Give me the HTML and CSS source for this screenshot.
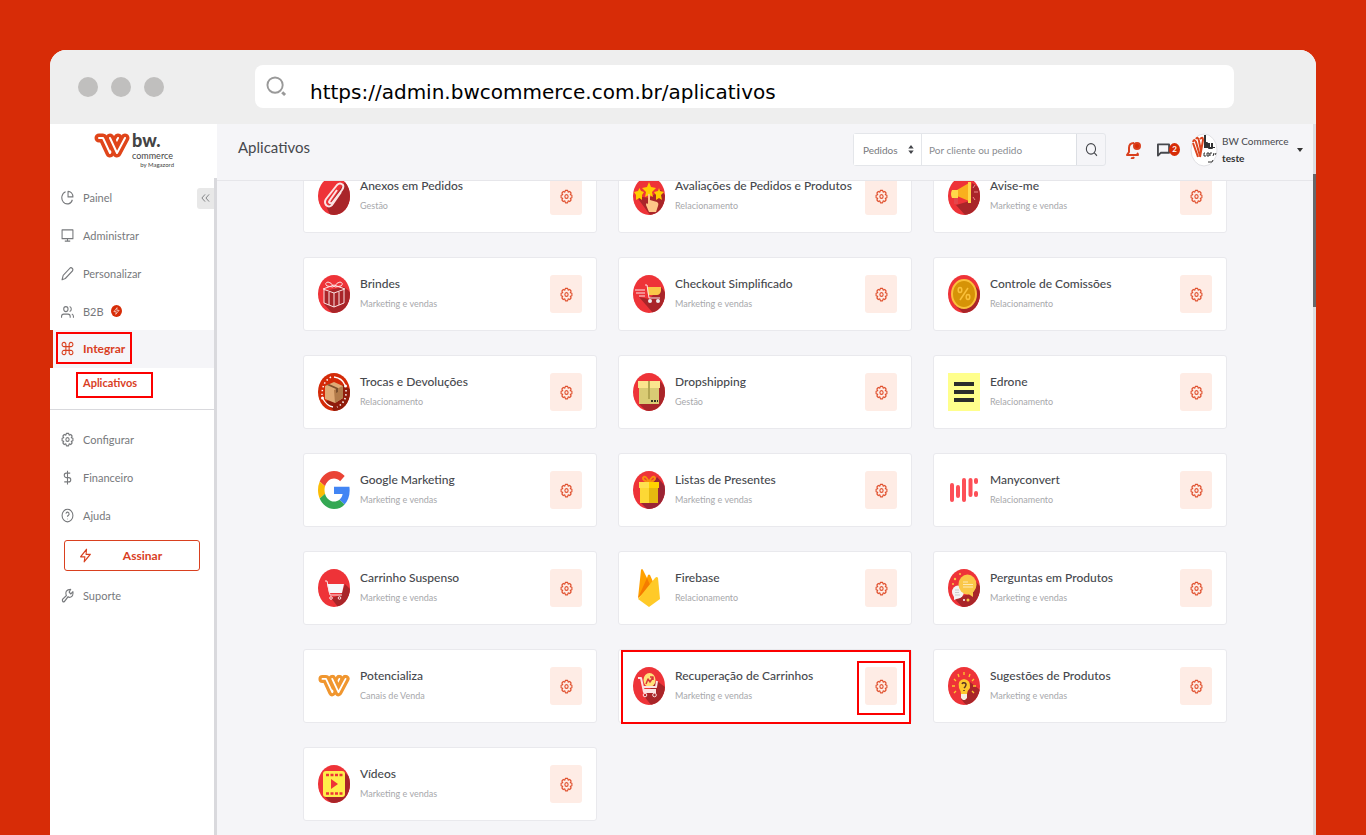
FILE: index.html
```
<!DOCTYPE html>
<html lang="pt-BR">
<head>
    <meta charset="UTF-8">
    <meta name="viewport" content="width=device-width, initial-scale=1.0">
    <title>Aplicativos - BW Commerce</title>
    <link rel="stylesheet" href="styles.css">
</head>
<body>
    <svg class="sprite" aria-hidden="true">
        <defs>
            <clipPath id="oval"><ellipse cx="16" cy="19" rx="16" ry="19"/></clipPath>
        </defs>
        <symbol id="gear" viewBox="0 0 24 24" preserveAspectRatio="none">
            <path d="M10 2h4l1 3 3-1 2.500 2.500L19 9l3 1v4l-3 1 1.500 2.500L18 20l-3-1-1 3h-4l-1-3-3 1-2.500-2.500L5 15l-3-1v-4l3-1-1.500-2.500L6 4l3 1z"/>
            <circle cx="12" cy="12" r="3"/>
        </symbol>
        <symbol id="bolt" viewBox="0 0 24 24" preserveAspectRatio="none"><path d="M14 2L3 14h8l-1.500 8L21 10h-8z"/></symbol>
        <symbol id="w-mark" viewBox="0 0 36 26">
            <path class="tube" d="M5 5h4l7 15 8-15"/>
            <path class="hollow" d="M5 5h4l7 15 8-15"/>
            <path class="tube" d="M16 5l7 15 8-15"/>
            <path class="hollow" d="M16 5l7 15 8-15"/>
        </symbol>
    </svg>

    <div class="window">
        <div class="browser-bar">
            <div class="dots"><span></span><span></span><span></span></div>
            <label class="address">
                <svg viewBox="0 0 22 22"><circle cx="9.500" cy="9.500" r="8"/><path d="M17 17l3 3" class="handle"/></svg>
                <input type="text" value="https://admin.bwcommerce.com.br/aplicativos" aria-label="Endereço">
            </label>
        </div>

        <div class="app">
            <aside class="sidebar">
                <a class="logo" href="#" aria-label="bw. commerce">
                    <svg class="logo-mark" viewBox="0 0 36 26"><use href="#w-mark"/></svg>
                    <span class="logo-text">
                        <b>bw.</b>
                        <span>commerce</span>
                        <small>by Magazord</small>
                    </span>
                </a>
                <nav class="menu">
                    <div class="menu-top">
                        <a class="item" href="#"><svg viewBox="0 0 24 24" preserveAspectRatio="none"><path d="M21 15.500A10 10 0 1 1 8.500 2.800M13 2v9h9a9 9 0 0 0-9-9z"/></svg>Painel</a>
                        <button class="collapse" aria-label="Recolher menu"><svg viewBox="0 0 10 10"><path d="M4.500 1L1 5l3.500 4M9 1L5.500 5 9 9"/></svg></button>
                    </div>
                    <a class="item" href="#"><svg viewBox="0 0 24 24" preserveAspectRatio="none"><path d="M2 3h20v14H2zM12 17v4M7 21h10"/></svg>Administrar</a>
                    <a class="item" href="#"><svg viewBox="0 0 24 24" preserveAspectRatio="none"><path d="M17 3q2-1 4 1t0 4L8 20l-6 2 2-7z"/></svg>Personalizar</a>
                    <a class="item" href="#"><svg viewBox="0 0 24 24" preserveAspectRatio="none"><circle cx="9" cy="8" r="4"/><path d="M1 22v-2q0-4 4-4h8q4 0 4 4v2M16 4q3 1 3 4t-3 4M20 16q3 1 3 4v2"/></svg>B2B<span class="b2b-badge"><svg><use href="#bolt"/></svg></span></a>
                    <a class="item active" href="#"><svg viewBox="0 0 24 24" preserveAspectRatio="none"><path d="M9 9h6v6H9zM9 9H6a3.500 3.500 0 1 1 3-3zM15 9V6a3.500 3.500 0 1 1 3 3zM15 15h3a3.500 3.500 0 1 1-3 3zM9 15v3a3.500 3.500 0 1 1-3-3z"/></svg>Integrar</a>
                    <a class="subitem" href="#">Aplicativos</a>
                    <hr>
                    <a class="item" href="#"><svg><use href="#gear"/></svg>Configurar</a>
                    <a class="item" href="#"><svg viewBox="0 0 24 24" preserveAspectRatio="none"><path d="M12 1v22M17 5H9.500a3.500 3.500 0 0 0 0 7h5a3.500 3.500 0 0 1 0 7H6"/></svg>Financeiro</a>
                    <a class="item" href="#"><svg viewBox="0 0 24 24" preserveAspectRatio="none"><circle cx="12" cy="12" r="10"/><path d="M9 9q1-3 3.500-2.500T15 10q-1 2-3 3v1M12 17v1"/></svg>Ajuda</a>
                    <button class="subscribe"><svg><use href="#bolt"/></svg><span>Assinar</span></button>
                    <a class="item" href="#"><svg viewBox="0 0 24 24" preserveAspectRatio="none"><path d="M15 6.500l3 3 4-3.500q1 6-3 8t-6 0l-7 8q-2 1-3-1t0-3l7-6q-2-4 0-7t8-3z"/></svg>Suporte</a>
                </nav>
            </aside>

            <main class="main">
                <header class="topbar">
                    <h1>Aplicativos</h1>
                    <form class="search">
                        <span class="select-wrap">
                            <select aria-label="Buscar em"><option>Pedidos</option><option>Clientes</option></select>
                            <svg viewBox="0 0 6 10"><path d="M0 4l3-4 3 4zM0 6l3 4 3-4z"/></svg>
                        </span>
                        <input type="text" placeholder="Por cliente ou pedido" aria-label="Por cliente ou pedido">
                        <button type="button" aria-label="Buscar"><svg viewBox="0 0 24 24" preserveAspectRatio="none"><circle cx="11" cy="11" r="8.500"/><path d="M17 17l5 5"/></svg></button>
                    </form>
                    <button class="bell" aria-label="Notificações"><svg viewBox="0 0 16 18"><path d="M8 2Q3 2 3 7v4l-2 3h11q0-1-1-2M5 17q2 1 3-1"/><circle cx="11" cy="5" r="3"/></svg></button>
                    <button class="chat" aria-label="Mensagens"><svg viewBox="0 0 14 14"><path d="M1 13V1h12v9H4z"/></svg><span>2</span></button>
                    <button class="user">
                        <svg class="avatar" viewBox="0 0 28 34">
                            <ellipse cx="14" cy="17" rx="13" ry="16"/>
                            <path class="red" d="M3 9q1-4 3 0l4 14M6 6q2-3 3 2l2 10M10 6q3-3 3 1l-3 17M3 10l5 14"/>
                            <path class="dark" d="M15 2v13M15 10h2v5M19 10v5h3v-5M22 10v5M24 14v1"/>
                            <path class="dark-thin" d="M15 20h-1v3h2M17 20h2v3h-2zM20 23v-3h2M23 23l1-3M25 22l1-2M18 29h4l1-2"/>
                        </svg>
                        <span class="user-name">BW Commerce<b>teste</b></span>
                        <span class="caret"></span>
                    </button>
                </header>

                <div class="content">
                    <div class="apps">
                        <article class="card">
                            <svg class="icon" viewBox="0 0 32 38"><g clip-path="url(#oval)"><path fill="#ee3338" d="M0 0h32v38H0z"/><path fill="#a92529" d="M27 5l5 6v27H12L9 31z"/></g><path class="line" d="M23 15l-9 13q-3 3-6 0-2-3 0-6L19 8q3-3 6 0 1 2-1 5L14 26q-2 1-3-1l1-2 7-10"/></svg>
                            <div class="info"><h2>Anexos em Pedidos</h2><p>Gestão</p></div>
                            <button class="config" aria-label="Configurar"><svg><use href="#gear"/></svg></button>
                        </article>
                        <article class="card">
                            <svg class="icon" viewBox="0 0 32 38"><g clip-path="url(#oval)"><path fill="#ee3338" d="M0 0h32v38H0z"/><path fill="#a92529" d="M3 19l14 19h15V18l-4-5-12 8z"/></g><path fill="#fc0" d="M16 5l2 5 5 1-4 4 1 5-4-2-4 2 1-5-4-4 5-1zM6.500 11l1.500 3 3 1-2 3v5l-2.500-2L3 23v-5l-2-3 4-1zM26 11l1 3 4 1-3 3 1 5-3-2-3 2v-5l-2-3 4-1z"/><path fill="#fdc689" d="M15 17q2-1 2 1v5l7 2q2 1 1 4l-2 6h-7l-3-7q0-3 2-1z"/></svg>
                            <div class="info"><h2>Avaliações de Pedidos e Produtos</h2><p>Relacionamento</p></div>
                            <button class="config" aria-label="Configurar"><svg><use href="#gear"/></svg></button>
                        </article>
                        <article class="card">
                            <svg class="icon" viewBox="0 0 32 38"><g clip-path="url(#oval)"><path fill="#ee3338" d="M0 0h32v38H0z"/><path fill="#a92529" d="M8 28l9 10h15V11l-8-5-2 18z"/></g><path fill="#f9b01e" d="M9 13l12-7v18L9 19z"/><path fill="#ffd94a" d="M4 13h6v8H4q-2-4 0-8zM20 5h3v21h-3z"/><path fill="#e4464b" d="M6 21h4v6H6z"/><path stroke="#e88" fill="none" stroke-width="1" d="M25 11l2-3M26 15h4M25 20l2 3"/></svg>
                            <div class="info"><h2>Avise-me</h2><p>Marketing e vendas</p></div>
                            <button class="config" aria-label="Configurar"><svg><use href="#gear"/></svg></button>
                        </article>

                        <article class="card">
                            <svg class="icon" viewBox="0 0 32 38"><g clip-path="url(#oval)"><path fill="#ee3338" d="M0 0h32v38H0z"/><path fill="#a92529" d="M6 29l8 9h18V17l-6-5-20 4z"/></g><path class="line thin" d="M5 14l11-4 11 4-11 4zM6 15v13l10 4 10-4V15M16 18v14M11 17v13M21 17v13M15 12L9 11q-3-3 1-4 3 0 6 5 3-5 6-5 4 1 1 4l-6 1"/></svg>
                            <div class="info"><h2>Brindes</h2><p>Marketing e vendas</p></div>
                            <button class="config" aria-label="Configurar"><svg><use href="#gear"/></svg></button>
                        </article>
                        <article class="card">
                            <svg class="icon" viewBox="0 0 32 38"><g clip-path="url(#oval)"><path fill="#ee3338" d="M0 0h32v38H0z"/><path fill="#a92529" d="M6 22l14 16h12V17l-4-5-12 12z"/></g><path fill="#fac748" d="M14 12h14v4q-1 4-4 4h-9z"/><path class="line thin" d="M12 10h2l2 13h11M2 15h10M3 18h9M6 21h6"/><circle cx="17" cy="26" r="2" fill="#eee"/><circle cx="25" cy="26" r="2" fill="#eee"/></svg>
                            <div class="info"><h2>Checkout Simplificado</h2><p>Marketing e vendas</p></div>
                            <button class="config" aria-label="Configurar"><svg><use href="#gear"/></svg></button>
                        </article>
                        <article class="card">
                            <svg class="icon" viewBox="0 0 32 38"><g clip-path="url(#oval)"><path fill="#ee3338" d="M0 0h32v38H0z"/><path fill="#a92529" d="M7 30l8 8h17V16l-6-6z"/></g><ellipse cx="16" cy="19" rx="12" ry="14" fill="#d69307" stroke="#fac03a" stroke-width="2"/><path fill="none" stroke="#fac03a" stroke-width="1.500" d="M20 13l-8 12"/><ellipse cx="12" cy="15" rx="1.800" ry="2.500" fill="none" stroke="#fac03a" stroke-width="1.500"/><ellipse cx="20" cy="22" rx="1.800" ry="2.500" fill="none" stroke="#fac03a" stroke-width="1.500"/></svg>
                            <div class="info"><h2>Controle de Comissões</h2><p>Relacionamento</p></div>
                            <button class="config" aria-label="Configurar"><svg><use href="#gear"/></svg></button>
                        </article>

                        <article class="card">
                            <svg class="icon" viewBox="0 0 32 38"><g clip-path="url(#oval)"><path fill="#d42a08" d="M0 0h32v38H0z"/><path fill="#8f1c0b" d="M8 29l8 9h16V16l-7-4z"/></g><path fill="#e0aa75" d="M7 13l9-4 9 4v12l-8 5-10-4z"/><path fill="#b27b4a" d="M16 17l9-4v12l-8 5z"/><path fill="#7c502e" d="M11 11l9 4v4l-2 1v-4l-9-4z"/><path fill="none" stroke="#fff" stroke-width="1.300" d="M16 4q8 1 11 8M5 26q4 7 10 8"/><path fill="none" stroke="#fff" stroke-width="1.500" stroke-dasharray="1.500 2.500" d="M13 4Q4 9 4 22M28 17q1 12-9 17"/><circle cx="27.500" cy="13" r="1.500" fill="#fff"/><circle cx="4.500" cy="25" r="1.500" fill="#fff"/></svg>
                            <div class="info"><h2>Trocas e Devoluções</h2><p>Relacionamento</p></div>
                            <button class="config" aria-label="Configurar"><svg><use href="#gear"/></svg></button>
                        </article>
                        <article class="card">
                            <svg class="icon" viewBox="0 0 32 38"><g clip-path="url(#oval)"><path fill="#ee3338" d="M0 0h32v38H0z"/><path fill="#a92529" d="M6 31l7 7h19V14l-5-6z"/></g><path fill="#d9cb74" d="M6 15h20v16H6z"/><path fill="#fbe58e" d="M5 8h22v7H5z"/><path fill="#b3a652" d="M15 8h2v18h-2z"/><path stroke="#332" stroke-width="2" stroke-dasharray="2 1" d="M18 28h7"/></svg>
                            <div class="info"><h2>Dropshipping</h2><p>Gestão</p></div>
                            <button class="config" aria-label="Configurar"><svg><use href="#gear"/></svg></button>
                        </article>
                        <article class="card">
                            <svg class="icon" viewBox="0 0 32 38"><path fill="#ffff8c" d="M0 0h32v38H0z"/><path stroke="#2b2d2c" stroke-width="4" d="M6 11h20M6 19h20M6 27h20"/></svg>
                            <div class="info"><h2>Edrone</h2><p>Relacionamento</p></div>
                            <button class="config" aria-label="Configurar"><svg><use href="#gear"/></svg></button>
                        </article>

                        <article class="card">
                            <svg class="icon" viewBox="0 0 48 48" preserveAspectRatio="none"><path fill="#ea4335" d="M24 9.500c3.540 0 6.710 1.220 9.210 3.600l6.850-6.850C35.900 2.380 30.470 0 24 0 14.620 0 6.510 5.380 2.560 13.220l7.980 6.190C12.430 13.720 17.740 9.500 24 9.500z"/><path fill="#4285f4" d="M47.500 24.550c0-1.570-.15-3.090-.38-4.550H24v9.020h12.940c-.58 2.960-2.260 5.480-4.780 7.180l7.730 6C44.400 38.020 47.500 31.840 47.500 24.550z"/><path fill="#fbbc05" d="M10.530 28.590A14.500 14.500 0 0 1 9.770 24c0-1.600.27-3.140.76-4.590l-7.980-6.190A24 24 0 0 0 0 24c0 3.880.92 7.540 2.560 10.780z"/><path fill="#34a853" d="M24 48c6.480 0 11.930-2.130 15.890-5.810l-7.730-6c-2.150 1.450-4.920 2.300-8.160 2.300-6.260 0-11.570-4.220-13.470-9.910l-7.980 6.190C6.510 42.620 14.620 48 24 48z"/></svg>
                            <div class="info"><h2>Google Marketing</h2><p>Marketing e vendas</p></div>
                            <button class="config" aria-label="Configurar"><svg><use href="#gear"/></svg></button>
                        </article>
                        <article class="card">
                            <svg class="icon" viewBox="0 0 32 38"><g clip-path="url(#oval)"><path fill="#ee3338" d="M0 0h32v38H0z"/><path fill="#9a2434" d="M7 31l7 7h18V15l-8-9z"/></g><path fill="none" stroke="#f78f0d" stroke-width="2" d="M16 11q-6-1-6-4 2-4 6 4 4-8 6-4 0 3-6 4z"/><path fill="#fdd835" d="M7 15h9v17H7z"/><path fill="#e6b90f" d="M16 15h9v17h-9z"/><path fill="#ffe04f" d="M6 11h10v6H6z"/><path fill="#ffd200" d="M16 11h10v6H16z"/></svg>
                            <div class="info"><h2>Listas de Presentes</h2><p>Marketing e vendas</p></div>
                            <button class="config" aria-label="Configurar"><svg><use href="#gear"/></svg></button>
                        </article>
                        <article class="card">
                            <svg class="icon" viewBox="0 0 32 38"><path fill="none" stroke="#fd4f57" stroke-width="4" stroke-linecap="round" d="M4 14v15M10 16v9M16 9v20M22.500 9v15M28 9v2M28 22v2"/></svg>
                            <div class="info"><h2>Manyconvert</h2><p>Relacionamento</p></div>
                            <button class="config" aria-label="Configurar"><svg><use href="#gear"/></svg></button>
                        </article>

                        <article class="card">
                            <svg class="icon" viewBox="0 0 32 38"><g clip-path="url(#oval)"><path fill="#ee3338" d="M0 0h32v38H0z"/><path fill="#a92529" d="M13 29l7 9h12V20l-5-5-4 11z"/></g><path fill="#f7f8fa" d="M9 15h17l-2 9H11z"/><path class="line thin" d="M7 12h2l3 14h12"/><circle cx="13" cy="29" r="1.300" class="line thin"/><circle cx="21.500" cy="29" r="1.300" class="line thin"/></svg>
                            <div class="info"><h2>Carrinho Suspenso</h2><p>Marketing e vendas</p></div>
                            <button class="config" aria-label="Configurar"><svg><use href="#gear"/></svg></button>
                        </article>
                        <article class="card">
                            <svg class="icon" viewBox="0 0 32 38"><path fill="#ffa000" d="M5 29L8 1q1-2 2 0l4 8 1-3q1-1 2 0l4 9z"/><path fill="#f57c00" d="M5 29l9-20 4 9z"/><path fill="#ffca28" d="M5 30L22 9q2-2 3 0l2 21-11 8z"/></svg>
                            <div class="info"><h2>Firebase</h2><p>Relacionamento</p></div>
                            <button class="config" aria-label="Configurar"><svg><use href="#gear"/></svg></button>
                        </article>
                        <article class="card">
                            <svg class="icon" viewBox="0 0 32 38"><g clip-path="url(#oval)"><path fill="#ee3338" d="M0 0h32v38H0z"/><path fill="#a92529" d="M6 29l8 9h18V17l-6-6-4 14z"/></g><ellipse cx="10" cy="23" rx="6" ry="6.500" fill="#f4f4f4"/><path fill="#f4f4f4" d="M6 26v5l5-2z"/><ellipse cx="19.500" cy="15.500" rx="9" ry="10" fill="#fac748"/><path fill="#fac748" d="M19 24l6 4v-6z"/><path stroke="#fde9b5" stroke-width="1" d="M15 13h5M15 15.500h10M15 18h10"/><path stroke="#ccc" stroke-width="1" d="M7 21h4M7 23.500h4M7 26h5"/><g fill="#fac748"><circle cx="7" cy="10" r="1.200"/><circle cx="20" cy="31" r="1.500"/><circle cx="12" cy="5" r="1"/><circle cx="5" cy="15" r="1"/></g><circle cx="16" cy="31" r="1" fill="#fff"/></svg>
                            <div class="info"><h2>Perguntas em Produtos</h2><p>Marketing e vendas</p></div>
                            <button class="config" aria-label="Configurar"><svg><use href="#gear"/></svg></button>
                        </article>

                        <article class="card">
                            <svg class="icon brand" viewBox="0 0 36 26"><use href="#w-mark"/></svg>
                            <div class="info"><h2>Potencializa</h2><p>Canais de Venda</p></div>
                            <button class="config" aria-label="Configurar"><svg><use href="#gear"/></svg></button>
                        </article>
                        <article class="card marked-card">
                            <svg class="icon" viewBox="0 0 32 38"><g clip-path="url(#oval)"><path fill="#ee3338" d="M0 0h32v38H0z"/><path fill="#a92529" d="M11 29l7 9h14V20l-8-6z"/></g><ellipse cx="16.500" cy="13" rx="6" ry="7" fill="#ffe27a"/><path fill="none" stroke="#d8343a" stroke-width="1.500" d="M13 17l2-5 2 3 3-5M17 10h3v3"/><path class="line" d="M5 11h3l3 14h12M10 20h13l1-6M11 23h12"/><circle cx="12" cy="28" r="1.800" class="line thin"/><circle cx="21.500" cy="28" r="1.800" class="line thin"/></svg>
                            <div class="info"><h2>Recuperação de Carrinhos</h2><p>Marketing e vendas</p></div>
                            <button class="config marked-config" aria-label="Configurar"><svg><use href="#gear"/></svg></button>
                        </article>
                        <article class="card">
                            <svg class="icon" viewBox="0 0 32 38"><g clip-path="url(#oval)"><path fill="#ee3338" d="M0 0h32v38H0z"/><path fill="#a92529" d="M13 32l5 6h14V23l-10-8z"/></g><path fill="#fdc92e" d="M13 27q0-3-2-6-2-8 5-9 7 1 6 9-3 3-3 6z"/><path fill="#f6f0e2" d="M13 27h6v4l-2 2h-2l-2-2z"/><path fill="none" stroke="#5a3722" stroke-width="1.500" d="M14 17q1-2 3-1t0 4l-1 1M16 23v1"/><path fill="none" stroke="#fdc92e" stroke-width="1.300" d="M16 5v3M10 7l1 3M22 7l-1 3M6 12l2 2M26 12l-2 2M4 19h3M28 19h-3M6 26l2-2M26 26l-2-2"/></svg>
                            <div class="info"><h2>Sugestões de Produtos</h2><p>Marketing e vendas</p></div>
                            <button class="config" aria-label="Configurar"><svg><use href="#gear"/></svg></button>
                        </article>

                        <article class="card">
                            <svg class="icon" viewBox="0 0 32 38"><g clip-path="url(#oval)"><path fill="#ee3338" d="M0 0h32v38H0z"/><path fill="#a92529" d="M6 31l7 7h19V12l-6-5z"/></g><rect x="5" y="6" width="22" height="26" rx="3" fill="#ffee4a"/><path stroke="#ee3338" stroke-width="2.500" stroke-dasharray="3 1.500" d="M8 10h17M8 28.500h17"/><path fill="#ee3338" d="M13 14l7 5-7 5z"/></svg>
                            <div class="info"><h2>Vídeos</h2><p>Marketing e vendas</p></div>
                            <button class="config" aria-label="Configurar"><svg><use href="#gear"/></svg></button>
                        </article>
                    </div>
                </div>
            </main>
            <div class="scrollbar"><span></span></div>
        </div>
    </div>
</body>
</html>
```
FILE: styles.css
```
*, ::before, ::after {
    box-sizing: border-box;
}
body {
    margin: 0;
    height: 100vh;
    padding: 50px 50px 0;
    overflow: hidden;
    background-color: #d72c07;
    font-family: Lato, "Open Sans", sans-serif;
    font-size: 11px;
    color: #46484d;
}
a {
    color: inherit;
    text-decoration: none;
}
button {
    padding: 0;
    border: none;
    background: none;
    font: inherit;
    color: inherit;
    cursor: pointer;
}
svg {
    flex-shrink: 0;
    fill: none;
    stroke: currentColor;
    stroke-width: 2;
    stroke-linejoin: round;
}
.sprite {
    position: absolute;
    width: 0;
    height: 0;
}
.tube {
    stroke-width: 9;
    stroke-linecap: round;
}
.hollow {
    stroke: #fff;
    stroke-width: 2;
    stroke-linecap: round;
}

/* browser frame */
.window {
    display: flex;
    flex-direction: column;
    height: 100%;
    border-radius: 16px 16px 0 0;
    overflow: hidden;
    background-color: #f5f5f8;
}
.browser-bar {
    display: flex;
    align-items: center;
    flex-shrink: 0;
    height: 74px;
    padding: 0 82px 1px 28px;
    background-color: #eeeeee;
}
.dots {
    display: flex;
    gap: 13px;
    width: 177px;
}
.dots span {
    width: 20px;
    height: 20px;
    border-radius: 50%;
    background-color: #c0bfbe;
}
.address {
    display: flex;
    align-items: center;
    flex: 1;
    height: 43px;
    padding: 0 11px;
    border-radius: 8px;
    background-color: #fff;
}
.address svg {
    width: 21px;
    height: 21px;
    color: #999;
}
.address .handle {
    stroke-width: 3;
}
.address input {
    flex: 1;
    height: 43px;
    margin-left: 23px;
    padding: 11px 0 0;
    border: none;
    outline: none;
    background: none;
    font-family: "DejaVu Sans", sans-serif;
    font-size: 20px;
    color: #000;
}

.app {
    display: flex;
    flex: 1;
    min-height: 0;
}

/* sidebar */
.sidebar {
    display: flex;
    flex-direction: column;
    width: 167px;
    flex-shrink: 0;
    background-color: #fff;
}
.logo {
    display: flex;
    gap: 2px;
    height: 54px;
    padding: 5px 0 0 44px;
    color: #444;
}
.logo-mark {
    width: 36px;
    height: 26px;
    margin-top: 4px;
    color: #e0451a;
}
.logo-text {
    display: flex;
    flex-direction: column;
    width: 42px;
}
.logo-text b {
    font-size: 18px;
    font-weight: 900;
    line-height: 22px;
}
.logo-text span {
    font-size: 9px;
    line-height: 10px;
}
.logo-text small {
    font-size: 6px;
    line-height: 8px;
    text-align: right;
}
.menu {
    flex: 1;
    border-right: 3px solid #d9d9dd;
    color: #77797c;
}
.menu-top {
    display: flex;
    align-items: center;
    justify-content: space-between;
}
.item {
    display: flex;
    align-items: center;
    height: 38px;
    padding-left: 11px;
    font-size: 11px;
}
.item > svg {
    width: 13px;
    height: 15px;
    margin-right: 9px;
}
.collapse {
    display: flex;
    align-items: center;
    justify-content: center;
    width: 17px;
    height: 21px;
    margin-top: 2px;
    border-radius: 3px 0 0 3px;
    background-color: #e8e8e8;
}
.collapse svg {
    width: 9px;
    height: 10px;
    stroke-width: 1;
}
.b2b-badge {
    display: flex;
    align-items: center;
    justify-content: center;
    width: 11px;
    height: 12px;
    margin-left: 7px;
    border-radius: 50%;
    background-color: #d72c07;
    color: #fff;
}
.b2b-badge svg {
    width: 7px;
    height: 8px;
}
.item.active {
    position: relative;
    padding: 0 0 2px 8px;
    border-left: 3px solid #d72c07;
    background-color: #f5f5f8;
    font-weight: bold;
    font-size: 12px;
    color: #d9401f;
}
.subitem {
    position: relative;
    display: block;
    padding-left: 33px;
    font-weight: bold;
    line-height: 30px;
    color: #d9401f;
}
.menu hr {
    margin: 11px 0 10px;
    border: none;
    border-top: 1px solid #d9d9dd;
}
.subscribe {
    display: flex;
    align-items: center;
    width: 136px;
    height: 31px;
    margin: 6px 0 5px 14px;
    padding: 0 14px;
    border: 1px solid #d9401f;
    border-radius: 3px;
    font-size: 12px;
    font-weight: bold;
    color: #d9401f;
}
.subscribe svg {
    width: 13px;
    height: 15px;
}
.subscribe span {
    flex: 1;
    padding-left: 8px;
    text-align: center;
}

/* red marks drawn over the page */
.item.active::after,
.subitem::after,
.marked-card::after,
.marked-config::after {
    content: "";
    position: absolute;
    border: 2px solid #fc0000;
    pointer-events: none;
}
.item.active::after {
    inset: 2px auto 4px 3px;
    width: 76px;
}
.subitem::after {
    inset: 4px auto 0 26px;
    width: 77px;
}
.marked-card::after {
    inset: 0 0 -2px 2px;
}
.marked-config::after {
    inset: -6px -8px -10px;
}

/* top bar */
.main {
    display: flex;
    flex: 1;
    flex-direction: column;
    min-width: 0;
}
.topbar {
    display: flex;
    align-items: center;
    flex-shrink: 0;
    height: 57px;
    padding: 0 10px 5px 21px;
    border-bottom: 1px solid #e6e6ea;
}
.topbar h1 {
    margin: 0 auto 5px 0;
    font-size: 15px;
    font-weight: normal;
    color: #46484d;
}
.search {
    display: flex;
    height: 33px;
    border: 1px solid #e4e6ea;
    border-radius: 3px;
    font-size: 10px;
    color: #77797c;
}
.select-wrap {
    display: flex;
    align-items: center;
    width: 68px;
    padding-right: 7px;
    border-right: 1px solid #e4e6ea;
    background-color: #fff;
}
.select-wrap select {
    flex: 1;
    width: 40px;
    height: 31px;
    padding: 0 0 0 9px;
    border: none;
    appearance: none;
    background: none;
    font: inherit;
    color: inherit;
}
.select-wrap svg {
    width: 6px;
    height: 9px;
    fill: #46484d;
    stroke: none;
}
.search input {
    width: 155px;
    padding: 0 7px;
    border: none;
    border-right: 1px solid #dcdfe4;
    font: inherit;
}
.search input::placeholder {
    color: #8a8c90;
}
.search button {
    width: 28px;
    color: #46484d;
}
.search button svg {
    width: 13px;
    height: 15px;
    vertical-align: middle;
}
.bell {
    margin-left: 20px;
    color: #d9401f;
}
.bell svg {
    display: block;
    width: 16px;
    height: 18px;
}
.bell circle {
    fill: #d72c07;
}
.chat {
    display: flex;
    align-items: center;
    margin-left: 15px;
}
.chat svg {
    width: 13px;
    height: 14px;
}
.chat span {
    width: 11px;
    height: 13px;
    margin-left: -1px;
    border-radius: 50%;
    background-color: #d72c07;
    font-size: 8px;
    font-weight: bold;
    line-height: 13px;
    color: #fff;
}
.user {
    display: flex;
    align-items: center;
    margin-left: 10px;
    text-align: left;
}
.avatar {
    width: 28px;
    height: 34px;
    stroke-width: 1;
}
.avatar ellipse {
    fill: #fff;
    stroke: #e0e0e4;
}
.avatar .red {
    stroke: #dd451e;
    stroke-width: 2;
}
.avatar .dark {
    stroke: #333;
    stroke-width: 2;
}
.avatar .dark-thin {
    stroke: #333;
}
.user-name {
    width: 75px;
    margin-left: 4px;
    font-size: 10px;
    line-height: 17px;
}
.user-name b {
    display: block;
    color: #333;
}
.caret {
    border: 3px solid transparent;
    border-top: 4px solid #333;
    border-bottom: none;
}

/* app list */
.content {
    flex: 1;
    overflow: hidden;
    padding: 0 86px;
}
.apps {
    display: grid;
    grid-template-columns: repeat(3, 1fr);
    gap: 24px 21px;
    margin-top: -22px;
}
.card {
    position: relative;
    display: flex;
    align-items: center;
    height: 74px;
    padding: 0 14px;
    border: 1px solid #e9e9ed;
    border-radius: 3px;
    background-color: #fff;
}
.icon {
    width: 32px;
    height: 38px;
    stroke: none;
}
.icon .line {
    fill: none;
    stroke: #fbe4e4;
    stroke-width: 2;
}
.icon .thin {
    stroke-width: 1;
}
.icon.brand {
    stroke: #f0962f;
}
.info {
    flex: 1;
    margin-left: 10px;
    padding-bottom: 2px;
}
.info h2 {
    margin: 0 0 3px;
    font-size: 12px;
    font-weight: 500;
    line-height: 17px;
    white-space: nowrap;
}
.info p {
    margin: 0;
    font-size: 9px;
    line-height: 17px;
    color: #a7a8ab;
}
.config {
    position: relative;
    width: 32px;
    height: 38px;
    border-radius: 3px;
    background-color: #feece5;
    color: #e0512f;
}
.config svg {
    display: block;
    width: 13px;
    height: 15px;
    margin: 0 auto;
}

.scrollbar {
    width: 3px;
    padding-top: 50px;
    background-color: #dcdce0;
}
.scrollbar span {
    display: block;
    height: 133px;
    background-color: #66676b;
}
```
